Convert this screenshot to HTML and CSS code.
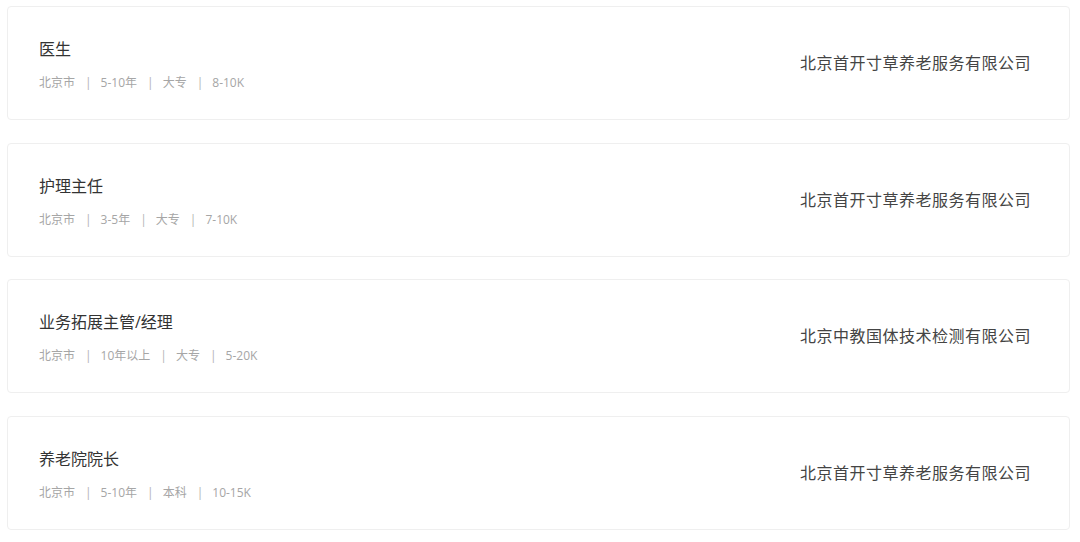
FILE: index.html
```html
<!doctype html>
<html>
<head>
<meta charset='utf-8'>
<title>job list</title>
<link rel="stylesheet" href="styles.css">
</head>
<body>
<div class='job_list'>
  <div class='job_card'>
    <div class='job_info'>
      <div class='job_title'>医生</div>
      <div class='job_meta'>北京市<span class='sep'>|</span>5-10年<span class='sep'>|</span>大专<span class='sep'>|</span>8-10K</div>
    </div>
    <div class='job_company'>北京首开寸草养老服务有限公司</div>
  </div>
  <div class='job_card'>
    <div class='job_info'>
      <div class='job_title'>护理主任</div>
      <div class='job_meta'>北京市<span class='sep'>|</span>3-5年<span class='sep'>|</span>大专<span class='sep'>|</span>7-10K</div>
    </div>
    <div class='job_company'>北京首开寸草养老服务有限公司</div>
  </div>
  <div class='job_card'>
    <div class='job_info'>
      <div class='job_title'>业务拓展主管/经理</div>
      <div class='job_meta'>北京市<span class='sep'>|</span>10年以上<span class='sep'>|</span>大专<span class='sep'>|</span>5-20K</div>
    </div>
    <div class='job_company'>北京中教国体技术检测有限公司</div>
  </div>
  <div class='job_card'>
    <div class='job_info'>
      <div class='job_title'>养老院院长</div>
      <div class='job_meta'>北京市<span class='sep'>|</span>5-10年<span class='sep'>|</span>本科<span class='sep'>|</span>10-15K</div>
    </div>
    <div class='job_company'>北京首开寸草养老服务有限公司</div>
  </div>
</div>
</body>
</html>
```
FILE: styles.css
```css
body {
  background: white;
  margin: 0;
  font-family: "Open Sans", "Noto Sans CJK SC", sans-serif;
}

.job_list {
  display: flex;
  flex-direction: column;
  gap: 22.5px;
  padding: 6px 10px 0 7px;
}

.job_card {
  box-sizing: border-box;
  height: 114px;
  border: 1px solid #efefef;
  border-radius: 4px;
  display: flex;
  justify-content: space-between;
  padding: 0 38px 0 31px;
}

.job_info {
  padding-top: 31px;
}

.job_title {
  font-size: 16px;
  line-height: 22px;
  color: #333;
}

.job_meta {
  margin-top: 14px;
  font-size: 12px;
  line-height: 18px;
  color: #a6a6a6;
}

.sep {
  margin: 0 9px 0 10px;
  color: #b3b3b3;
}

.job_company {
  align-self: center;
  font-size: 16px;
  line-height: 22px;
  letter-spacing: 0.5px;
  color: #444;
}
```
